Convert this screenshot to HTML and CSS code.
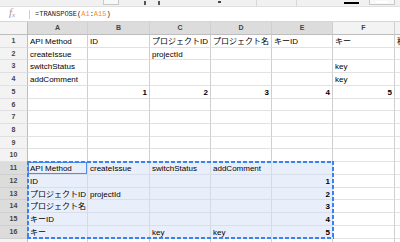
FILE: index.html
```html
<!DOCTYPE html>
<html>
<head>
  <title>Sheet</title>
  <link rel="stylesheet" href="styles.css">
</head>
<body>
  <div class="toolbar">
    <span class="tb-box tb-a"></span>
    <span class="tb-glyph tb-b"></span>
    <span class="tb-glyph tb-c"></span>
    <span class="tb-dot tb-d"></span>
    <span class="tb-sep tb-e"></span>
    <span class="tb-sep tb-f"></span>
    <span class="tb-color tb-g"></span>
    <span class="tb-box tb-h"><span class="tb-fill"></span></span>
  </div>

  <div class="formula-bar">
    <span class="fx">f<sub>x</sub></span>
    <span class="fx-sep"></span>
    <span class="formula">=TRANSPOSE(<span class="ref">A1</span>:<span class="ref">A15</span>)</span>
  </div>

  <div class="sheet">
    <div class="grid">
      <!-- column headers -->
      <div class="corner"></div>
      <div class="col sel">A</div>
      <div class="col sel">B</div>
      <div class="col sel">C</div>
      <div class="col sel">D</div>
      <div class="col sel">E</div>
      <div class="col">F</div>
      <div class="col">G</div>

      <div class="row">1</div>
      <div class="c">API Method</div>
      <div class="c">ID</div>
      <div class="c">プロジェクトID</div>
      <div class="c">プロジェクト名</div>
      <div class="c">キーID</div>
      <div class="c">キー</div>
      <div class="c">種別</div>

      <div class="row">2</div>
      <div class="c">createIssue</div>
      <div class="c"></div>
      <div class="c">projectId</div>
      <div class="c"></div>
      <div class="c"></div>
      <div class="c"></div>
      <div class="c"></div>

      <div class="row">3</div>
      <div class="c">switchStatus</div>
      <div class="c"></div>
      <div class="c"></div>
      <div class="c"></div>
      <div class="c"></div>
      <div class="c">key</div>
      <div class="c"></div>

      <div class="row">4</div>
      <div class="c">addComment</div>
      <div class="c"></div>
      <div class="c"></div>
      <div class="c"></div>
      <div class="c"></div>
      <div class="c">key</div>
      <div class="c"></div>

      <div class="row">5</div>
      <div class="c"></div>
      <div class="c n">1</div>
      <div class="c n">2</div>
      <div class="c n">3</div>
      <div class="c n">4</div>
      <div class="c n">5</div>
      <div class="c"></div>

      <div class="row">6</div>
      <div class="c"></div><div class="c"></div><div class="c"></div><div class="c"></div><div class="c"></div><div class="c"></div><div class="c"></div>
      <div class="row">7</div>
      <div class="c"></div><div class="c"></div><div class="c"></div><div class="c"></div><div class="c"></div><div class="c"></div><div class="c"></div>
      <div class="row">8</div>
      <div class="c"></div><div class="c"></div><div class="c"></div><div class="c"></div><div class="c"></div><div class="c"></div><div class="c"></div>
      <div class="row">9</div>
      <div class="c"></div><div class="c"></div><div class="c"></div><div class="c"></div><div class="c"></div><div class="c"></div><div class="c"></div>
      <div class="row">10</div>
      <div class="c"></div><div class="c"></div><div class="c"></div><div class="c"></div><div class="c"></div><div class="c"></div><div class="c"></div>

      <div class="row sel">11</div>
      <div class="c s active">API Method</div>
      <div class="c s">createIssue</div>
      <div class="c s">switchStatus</div>
      <div class="c s">addComment</div>
      <div class="c s"></div>
      <div class="c"></div>
      <div class="c"></div>

      <div class="row sel">12</div>
      <div class="c s">ID</div>
      <div class="c s"></div>
      <div class="c s"></div>
      <div class="c s"></div>
      <div class="c s n">1</div>
      <div class="c"></div>
      <div class="c"></div>

      <div class="row sel">13</div>
      <div class="c s">プロジェクトID</div>
      <div class="c s">projectId</div>
      <div class="c s"></div>
      <div class="c s"></div>
      <div class="c s n">2</div>
      <div class="c"></div>
      <div class="c"></div>

      <div class="row sel">14</div>
      <div class="c s">プロジェクト名</div>
      <div class="c s"></div>
      <div class="c s"></div>
      <div class="c s"></div>
      <div class="c s n">3</div>
      <div class="c"></div>
      <div class="c"></div>

      <div class="row sel">15</div>
      <div class="c s">キーID</div>
      <div class="c s"></div>
      <div class="c s"></div>
      <div class="c s"></div>
      <div class="c s n">4</div>
      <div class="c"></div>
      <div class="c"></div>

      <div class="row sel">16</div>
      <div class="c s">キー</div>
      <div class="c s"></div>
      <div class="c s">key</div>
      <div class="c s">key</div>
      <div class="c s n">5</div>
      <div class="c"></div>
      <div class="c"></div>

      <div class="row"></div>
      <div class="c"></div><div class="c"></div><div class="c"></div><div class="c"></div><div class="c"></div><div class="c"></div><div class="c"></div>
    </div>

    <!-- copy marquee around A11:E16 -->
    <div class="marquee"></div>
  </div>
</body>
</html>
```

FILE: styles.css
```css
body {
  margin: 0;
  padding: 0;
  width: 400px;
  height: 242px;
  overflow: hidden;
  background-color: #fff;
  font-family: "Liberation Sans", Arial, "Noto Sans CJK JP", sans-serif;
  font-size: 8px;
  color: #000;
}

/* toolbar (cut off at the top) */
.toolbar {
  position: relative;
  height: 7px;
  background-color: #f1f1f1;
  border-bottom: 1px solid #e0e0e0;
  box-sizing: border-box;
  display: flex;
  align-items: flex-start;
}

.tb-box {
  height: 5px;
  border: 1px solid #c8c8c8;
  border-top: none;
  background-color: #f8f8f8;
  box-sizing: border-box;
}

.tb-a {
  margin-left: 103px;
  width: 16px;
}

.tb-glyph {
  width: 2px;
  height: 4px;
  background-color: #555;
  margin-top: 1px;
}

.tb-b {
  margin-left: 25px;
}

.tb-c {
  margin-left: 12px;
}

.tb-dot {
  width: 3px;
  height: 2px;
  background-color: #444;
  margin-top: 1px;
}

.tb-d {
  margin-left: 58px;
}

.tb-sep {
  width: 1px;
  height: 6px;
  background-color: #d8d8d8;
}

.tb-e {
  margin-left: 35px;
}

.tb-f {
  margin-left: 39px;
}

.tb-color {
  width: 15px;
  height: 2px;
  margin-top: 2px;
  background-color: #000;
}

.tb-g {
  margin-left: 47px;
}

.tb-h {
  margin-left: 10px;
  width: 26px;
  padding: 1px 6px 0;
}

.tb-fill {
  display: block;
  height: 2px;
  background-color: #fff;
}

/* formula bar */
.formula-bar {
  height: 15px;
  display: flex;
  align-items: center;
  background-color: #fff;
  border-bottom: 1px solid #d6d6d6;
  box-sizing: border-box;
}

.fx {
  width: 29px;
  padding-left: 9px;
  box-sizing: border-box;
  font-family: "Liberation Serif", serif;
  font-style: italic;
  font-size: 11px;
  line-height: 11px;
  color: #9a9a9a;
}

.fx sub {
  font-size: 7px;
  vertical-align: -1px;
}

.fx-sep {
  width: 1px;
  height: 9px;
  background-color: #d0d0d0;
}

.formula {
  margin-left: 5px;
  font-family: "Liberation Mono", monospace;
  font-size: 7px;
  color: #222;
}

.ref {
  color: #f0901a;
}

/* sheet grid */
.sheet {
  position: relative;
}

.grid {
  display: grid;
  grid-template-columns: 28px 60px 62px 61px 61px 61px 62px 20px;
  grid-template-rows: 13px;
  grid-auto-rows: 12.73px;
}

.grid > div {
  box-sizing: border-box;
  overflow: hidden;
  white-space: nowrap;
}

.corner {
  background-color: #f3f3f3;
  border-right: 1px solid #bdbdbd;
  border-bottom: 1px solid #bdbdbd;
}

.col {
  background-color: #f3f3f3;
  border-right: 1px solid #cfcfcf;
  border-bottom: 1px solid #bdbdbd;
  text-align: center;
  font-size: 7px;
  font-weight: bold;
  line-height: 12px;
  color: #444;
}

.col.sel {
  background-color: #dcdcdc;
}

.row {
  background-color: #f3f3f3;
  border-right: 1px solid #bdbdbd;
  border-bottom: 1px solid #e0e0e0;
  text-align: center;
  font-size: 7px;
  font-weight: bold;
  line-height: 12.73px;
  color: #444;
}

.row.sel {
  background-color: #dcdcdc;
  border-bottom-color: #cfcfcf;
}

.c {
  padding: 1px 2px 0;
  line-height: 11.73px;
  border-right: 1px solid #cfcfcf;
  border-bottom: 1px solid #e2e2e2;
}

.n {
  text-align: right;
  font-weight: bold;
}

.s {
  background-color: #e8effb;
  border-right-color: #d4dbe6;
  border-bottom-color: #d8dfea;
}

.active {
  box-shadow: inset 0 0 0 1px #4d8ef0;
}

/* dashed copy border */
.marquee {
  position: absolute;
  left: 27px;
  top: 139.3px;
  width: 307px;
  height: 77.4px;
  pointer-events: none;
  background:
    repeating-linear-gradient(90deg, #3b82f0 0 4px, transparent 4px 6px) top left / 100% 2px no-repeat,
    repeating-linear-gradient(90deg, #3b82f0 0 4px, transparent 4px 6px) bottom left / 100% 2px no-repeat,
    repeating-linear-gradient(180deg, #3b82f0 0 4px, transparent 4px 6px) top left / 2px 100% no-repeat,
    repeating-linear-gradient(180deg, #3b82f0 0 4px, transparent 4px 6px) top right / 2px 100% no-repeat;
}
```
